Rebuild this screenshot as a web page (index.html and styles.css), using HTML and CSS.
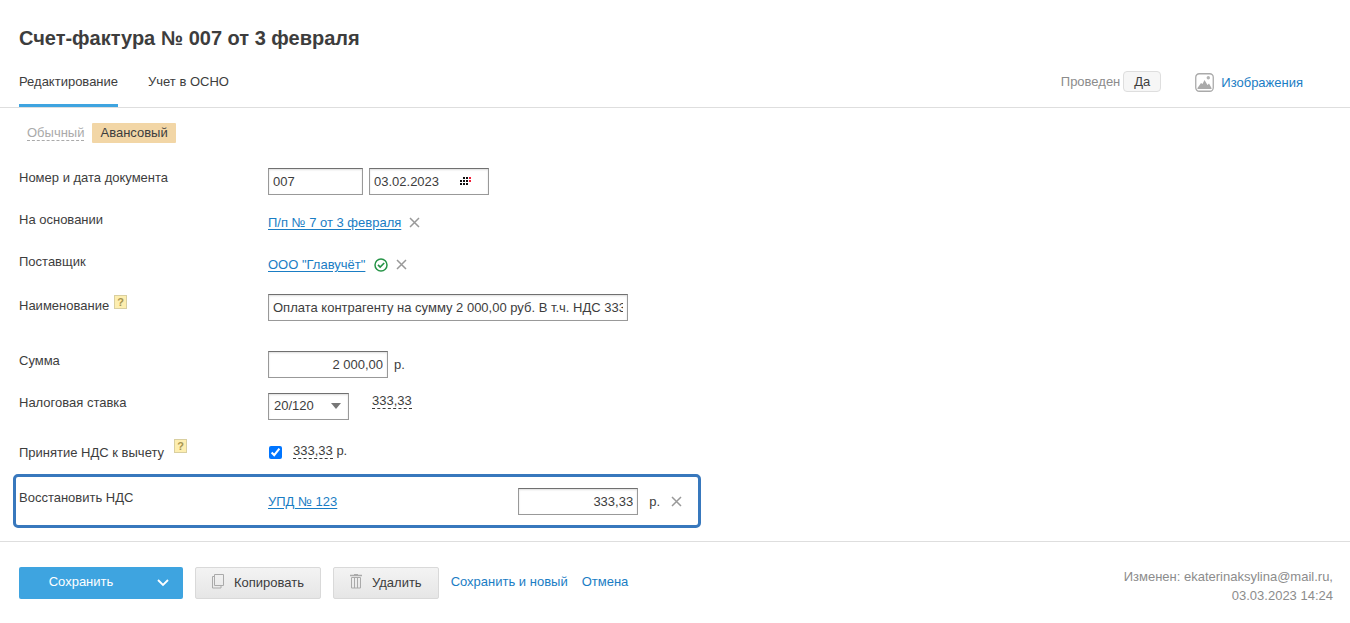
FILE: index.html
```html
<!DOCTYPE html>
<html lang="ru">
<head>
<meta charset="utf-8">
<title>Счет-фактура № 007 от 3 февраля</title>
<link rel="stylesheet" href="styles.css">
</head>
<body>
<header class="header">
  <h1 class="title">Счет-фактура № 007 от 3 февраля</h1>
  <div class="header-bar">
    <nav class="tabs">
      <a class="tab tab-active" href="#edit">Редактирование</a>
      <a class="tab" href="#osno">Учет в ОСНО</a>
    </nav>
    <div class="status">
      <span class="muted">Проведен</span>
      <button class="status-button" type="button">Да</button>
      <a class="images" href="#images">
        <svg width="19" height="19" viewBox="0 0 19 19" aria-hidden="true">
          <rect x=".75" y=".75" width="17.500" height="17.500" rx="3.500" fill="#fff" stroke="#aaa" stroke-width="1.300"/>
          <path d="M2.500 16v-1l3.500-5 1.500 1L9.500 7l3 5 1.500-1.500L16.500 15v1z" fill="#aaa"/>
          <circle cx="13.300" cy="4.800" r="1.700" fill="#b4b4b4"/>
        </svg>
        Изображения
      </a>
    </div>
  </div>
</header>

<form class="document">
  <div class="kinds">
    <button class="kind" type="button"><span class="dashed">Обычный</span></button>
    <button class="kind kind-active" type="button">Авансовый</button>
  </div>

  <div class="rows">
    <div class="row">
      <label class="label" for="number">Номер и дата документа</label>
      <div class="value">
        <input class="field field-number" id="number" type="text" value="007">
        <span class="date">
          <input class="field field-date" type="text" value="03.02.2023" aria-label="Дата документа">
          <button class="calendar" type="button" aria-label="Календарь">
            <svg width="12" height="9" viewBox="0 0 12 9" shape-rendering="crispEdges">
              <path d="M3 0h2v2H3zM6 0h2v2H6zM0 3h2v2H0zM3 3h2v2H3zM6 3h2v2H6zM0 6h2v2H0zM3 6h2v2H3zM6 6h2v2H6z" fill="#111"/>
              <path d="M9 0h2v2H9zM9 3h2v2H9z" fill="#f0203a"/>
            </svg>
          </button>
        </span>
      </div>
    </div>
    <div class="row">
      <span class="label">На основании</span>
      <div class="value value-link">
        <a class="link" href="#payment">П/п № 7 от 3 февраля</a>
        <button class="remove" type="button" aria-label="Убрать основание">
          <svg width="11" height="11" viewBox="0 0 11 11"><path d="M1 1l9 9M10 1l-9 9" stroke="#999" stroke-width="1.500"/></svg>
        </button>
      </div>
    </div>
    <div class="row">
      <span class="label">Поставщик</span>
      <div class="value value-link">
        <a class="link" href="#supplier">ООО "Главучёт"</a>
        <svg class="verified" width="14" height="14" viewBox="0 0 14 14" aria-hidden="true">
          <circle cx="7" cy="7" r="6" fill="none" stroke="#269447" stroke-width="1.500"/>
          <path d="M4 6.800l2.200 2.300L10.200 5" fill="none" stroke="#269447" stroke-width="1.700"/>
        </svg>
        <button class="remove" type="button" aria-label="Убрать поставщика">
          <svg width="11" height="11" viewBox="0 0 11 11"><path d="M1 1l9 9M10 1l-9 9" stroke="#999" stroke-width="1.500"/></svg>
        </button>
      </div>
    </div>
    <div class="row row-spaced">
      <div class="label label-help">
        <label for="name">Наименование</label>
        <button class="help" type="button">?</button>
      </div>
      <div class="value">
        <input class="field field-name" id="name" type="text" value="Оплата контрагенту на сумму 2 000,00 руб. В т.ч. НДС 333,33">
      </div>
    </div>
    <div class="row">
      <label class="label" for="sum">Сумма</label>
      <div class="value">
        <input class="field field-sum" id="sum" type="text" value="2 000,00">
        <span>р.</span>
      </div>
    </div>
    <div class="row">
      <label class="label" for="rate">Налоговая ставка</label>
      <div class="value value-rate">
        <span class="select">
          <select class="field field-rate" id="rate"><option>20/120</option></select>
        </span>
        <button class="amount" type="button">333,33</button>
      </div>
    </div>
    <div class="row row-vat">
      <div class="label label-help label-vat">
        <label for="deduct">Принятие НДС к вычету</label>
        <button class="help" type="button">?</button>
      </div>
      <div class="value value-vat">
        <input class="check" id="deduct" type="checkbox" checked>
        <span><button class="amount" type="button">333,33</button> р.</span>
      </div>
    </div>
  </div>

  <div class="row row-marked">
    <label class="label" for="restore">Восстановить НДС</label>
    <div class="value value-restore">
      <a class="link" href="#upd">УПД № 123</a>
      <input class="field field-sum" id="restore" type="text" value="333,33">
      <span class="unit">р.</span>
      <button class="remove" type="button" aria-label="Убрать документ">
        <svg width="11" height="11" viewBox="0 0 11 11"><path d="M1 1l9 9M10 1l-9 9" stroke="#999" stroke-width="1.500"/></svg>
      </button>
    </div>
  </div>
</form>

<footer class="footer">
  <div class="actions">
    <div class="save">
      <button class="save-main" type="button">Сохранить</button>
      <button class="save-more" type="button" aria-label="Другие действия">
        <svg width="12" height="8" viewBox="0 0 12 8"><path d="M1 1l5 5 5-5" fill="none" stroke="#fff" stroke-width="1.800"/></svg>
      </button>
    </div>
    <button class="button" type="button">
      <svg width="12" height="15" viewBox="0 0 12 15" fill="none" stroke="#aaa">
        <path d="M2.500 .5h9v11h-9zM2.500 2.500h-2v11.500h8.500v-2.500"/>
      </svg>
      Копировать
    </button>
    <button class="button" type="button">
      <svg width="12" height="15" viewBox="0 0 12 15" fill="none" stroke="#aaa">
        <path d="M0 1.500h12" stroke-width="1.500"/><path d="M4 .5h4M1.500 3.500h9v10.500h-9zM4.500 4v10M7.500 4v10"/>
      </svg>
      Удалить
    </button>
    <div class="links">
      <a href="#save-new">Сохранить и новый</a>
      <a href="#cancel">Отмена</a>
    </div>
  </div>
  <p class="changed">Изменен: ekaterinaksylina@mail.ru,<br>03.03.2023 14:24</p>
</footer>
</body>
</html>
```
FILE: styles.css
```css
* {
  box-sizing: border-box;
}

body {
  margin: 0;
  background: #fff;
  color: #3d3d3d;
  font: 13px/20px "Liberation Sans", Arial, sans-serif;
}

button,
input,
select {
  margin: 0;
  font: inherit;
  color: inherit;
}

button {
  padding: 0;
  border: 0;
  background: none;
  cursor: pointer;
}

a {
  color: #1a7dc4;
  text-decoration: none;
}

svg {
  display: block;
  flex: none;
}

/* Header */

.header {
  padding: 24px 0 0 19px;
  border-bottom: 1px solid #dedede;
}

.title {
  margin: 0;
  font-size: 20px;
  line-height: 28px;
}

.header-bar {
  display: flex;
  justify-content: space-between;
  margin-top: 20px;
}

.tabs {
  display: flex;
  gap: 30px;
}

.tab {
  height: 35px;
  border-bottom: 3px solid transparent;
  color: inherit;
}

.tab-active {
  border-color: #3ea4e0;
}

.status {
  display: flex;
  align-items: flex-start;
  padding-right: 47px;
}

.muted {
  color: #8c8c8c;
}

.status-button {
  width: 38px;
  height: 21px;
  margin: -1px 34px 0 3px;
  border: 1px solid #dedede;
  border-radius: 4px;
  background: #f6f6f6;
  line-height: 19px;
}

.images {
  display: flex;
  align-items: flex-start;
  gap: 7px;
  padding-top: 1px;
}

/* Document form */

.document {
  padding: 15px 13px 13px;
  border-bottom: 1px solid #dedede;
}

.kinds {
  display: flex;
  padding-left: 6px;
}

.kind {
  display: flex;
  align-items: flex-start;
  height: 20px;
  padding: 0 8px;
  border-radius: 1px;
  color: #aaa;
  line-height: 20px;
}

.kind-active {
  background: #f2d6a6;
  color: #3d3d3d;
}

.dashed {
  height: 18px;
  border-bottom: 1px dashed #aaa;
}

.rows {
  padding: 25px 6px 0;
}

.row {
  display: grid;
  grid-template-columns: 249px 1fr;
  align-items: start;
  margin-bottom: 15px;
}

.row-spaced {
  margin-bottom: 30px;
}

.row-vat {
  margin-bottom: 11px;
}

.row-marked {
  width: 688px;
  max-width: 100%;
  margin: 0;
  padding: 11px 12px 10px 3px;
  border: 3px solid #3878bd;
  border-radius: 5px;
}

.value {
  display: flex;
  align-items: center;
  gap: 6px;
  min-height: 27px;
}

.value-link {
  padding-bottom: 2px;
}

.field {
  height: 27px;
  padding: 0 4px;
  border: 1px solid #999;
  border-top-color: #707070;
  border-radius: 0;
  background: #fff;
  box-shadow: inset 0 1px 2px #ddd;
}

.field-number {
  width: 95px;
}

.date,
.select {
  position: relative;
  display: flex;
}

.field-date {
  width: 120px;
}

.calendar {
  position: absolute;
  top: 9px;
  right: 17px;
}

.field-name {
  width: 360px;
}

.field-sum {
  width: 120px;
  text-align: right;
}

.field-rate {
  width: 81px;
  padding: 0 5px 2px;
  appearance: none;
}

.select::after {
  content: "";
  position: absolute;
  top: 10px;
  right: 8px;
  border: 5px solid transparent;
  border-top: 6px solid #777;
  border-bottom: 0;
  pointer-events: none;
}

.link {
  text-decoration: underline;
  text-underline-offset: 2px;
}

.remove {
  padding: 2px;
}

.verified {
  margin: 1px 0 0 3px;
}

.label-help {
  display: flex;
  align-items: flex-start;
  gap: 5px;
}

.label-help label {
  padding-top: 2px;
}

.help {
  width: 13px;
  height: 14px;
  margin-top: 1px;
  border: 1px solid #d9cfa0;
  background: #fdeeb0;
  color: #a89550;
  font-size: 11px;
  font-weight: bold;
  line-height: 12px;
}

.label-vat {
  gap: 10px;
}

.label-vat label {
  padding-top: 8px;
}

.label-vat .help {
  margin-top: 4px;
}

.value-rate {
  align-items: flex-start;
  gap: 23px;
}

.amount {
  height: 16px;
  border-bottom: 1px dashed #3d3d3d;
  line-height: 16px;
}

.value-vat {
  align-items: flex-start;
  gap: 10px;
  padding-top: 6px;
}

.check {
  width: 13px;
  height: 13px;
  margin: 5px 1px 0;
  accent-color: #0075ff;
}

.value-restore {
  display: grid;
  grid-template-columns: 1fr 120px auto auto;
}

.value-restore .remove {
  padding: 2px 4px;
}

.unit {
  padding: 0 1px 0 5px;
}

/* Footer */

.footer {
  display: flex;
  justify-content: space-between;
  align-items: flex-start;
  padding: 25px 17px 18px 19px;
}

.actions {
  display: flex;
  align-items: center;
  gap: 12px;
}

.save {
  display: flex;
  height: 32px;
  border-radius: 2px;
  background: #3ea4e0;
  color: #fff;
}

.save-main {
  width: 124px;
  padding-bottom: 3px;
}

.save-more {
  display: flex;
  justify-content: center;
  align-items: center;
  width: 40px;
}

.button {
  display: flex;
  align-items: center;
  gap: 10px;
  height: 32px;
  padding: 0 16px;
  border: 1px solid #d9d9d9;
  border-radius: 2px;
  background: linear-gradient(#f3f3f3, #e6e6e6);
}

.button svg {
  margin-bottom: 3px;
}

.links {
  display: flex;
  gap: 14px;
  padding-bottom: 2px;
}

.changed {
  margin: 0;
  color: #8c8c8c;
  line-height: 19px;
  text-align: right;
}
```
